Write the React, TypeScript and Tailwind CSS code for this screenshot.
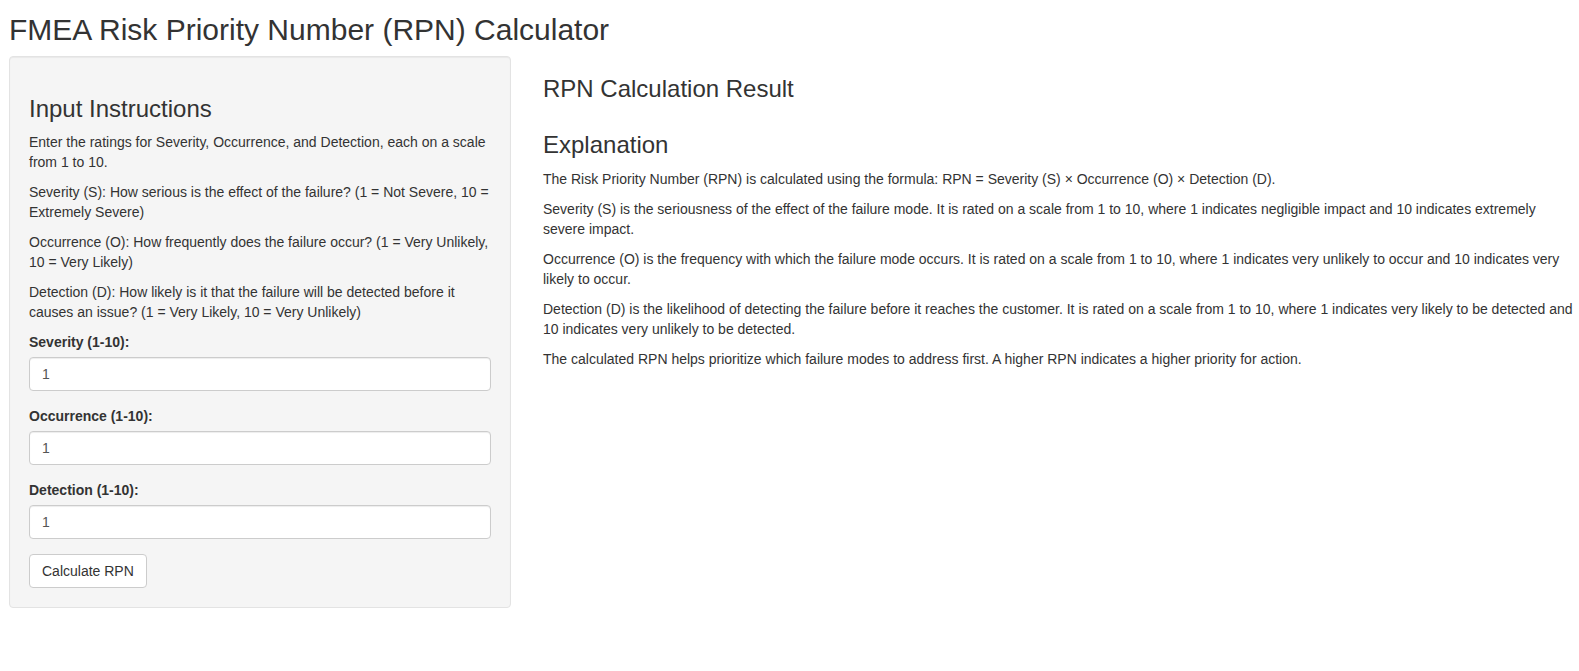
import { useState } from "react";

function NumberField({ label, value, setValue }: { label: string; value: string; setValue: (v: string) => void }) {
    return (
        <div className="mb-[15px]">
            <label className="mb-[5px] inline-block font-bold">{label}</label>
            <input
                type="text"
                value={value}
                onChange={(e) => setValue(e.target.value)}
                className="block h-[34px] w-full rounded-[4px] border border-[#ccc] bg-white px-[12px] py-[6px] text-[14px] leading-[20px] text-[#555] shadow-[inset_0_1px_1px_rgba(0,0,0,0.075)] outline-none"
            />
        </div>
    );
}

export default function App() {
    const [severity, setSeverity] = useState("1");
    const [occurrence, setOccurrence] = useState("1");
    const [detection, setDetection] = useState("1");
    const [rpn, setRpn] = useState<number | null>(null);

    const calculate = () => {
        const s = Number(severity), o = Number(occurrence), d = Number(detection);
        setRpn(s * o * d);
    };

    return (
        <div className="min-h-screen bg-white pl-[9px] pr-[4px] font-['Liberation_Sans',Arial,sans-serif] text-[14px] leading-[20px] text-[#333]">
            <h2 className="mt-[13px] mb-[10px] text-[30px] leading-[33px] font-normal">
                FMEA Risk Priority Number (RPN) Calculator
            </h2>

            <div className="flex items-start gap-[32px]">
                {/* Sidebar */}
                <div className="w-[502px] shrink-0 rounded-[4px] border border-[#e3e3e3] bg-[#f5f5f5] p-[19px] shadow-[inset_0_1px_1px_rgba(0,0,0,0.05)]">
                    <h3 className="mt-[20px] mb-[10px] text-[24px] leading-[26.4px] font-normal">Input Instructions</h3>
                    <p className="mb-[10px]">Enter the ratings for Severity, Occurrence, and Detection, each on a scale from 1 to 10.</p>
                    <p className="mb-[10px]">Severity (S): How serious is the effect of the failure? (1 = Not Severe, 10 = Extremely Severe)</p>
                    <p className="mb-[10px]">Occurrence (O): How frequently does the failure occur? (1 = Very Unlikely, 10 = Very Likely)</p>
                    <p className="mb-[10px]">Detection (D): How likely is it that the failure will be detected before it causes an issue? (1 = Very Likely, 10 = Very Unlikely)</p>

                    <NumberField label="Severity (1-10):" value={severity} setValue={setSeverity} />
                    <NumberField label="Occurrence (1-10):" value={occurrence} setValue={setOccurrence} />
                    <NumberField label="Detection (1-10):" value={detection} setValue={setDetection} />

                    <button
                        type="button"
                        onClick={calculate}
                        className="rounded-[4px] border border-[#ccc] bg-white px-[12px] py-[6px] text-[14px] leading-[20px] text-[#333] hover:bg-[#e6e6e6]"
                    >
                        Calculate RPN
                    </button>
                </div>

                {/* Main panel */}
                <div className="min-w-0 flex-1">
                    <h3 className="mt-[20px] mb-[10px] text-[24px] leading-[26.4px] font-normal">RPN Calculation Result</h3>
                    <div>{rpn !== null ? `RPN: ${rpn}` : ""}</div>
                    <h3 className="mt-[30px] mb-[10px] text-[24px] leading-[26.4px] font-normal">Explanation</h3>
                    <p className="mb-[10px]">The Risk Priority Number (RPN) is calculated using the formula: RPN = Severity (S) × Occurrence (O) × Detection (D).</p>
                    <p className="mb-[10px]">Severity (S) is the seriousness of the effect of the failure mode. It is rated on a scale from 1 to 10, where 1 indicates negligible impact and 10 indicates extremely severe impact.</p>
                    <p className="mb-[10px]">Occurrence (O) is the frequency with which the failure mode occurs. It is rated on a scale from 1 to 10, where 1 indicates very unlikely to occur and 10 indicates very likely to occur.</p>
                    <p className="mb-[10px]">Detection (D) is the likelihood of detecting the failure before it reaches the customer. It is rated on a scale from 1 to 10, where 1 indicates very likely to be detected and 10 indicates very unlikely to be detected.</p>
                    <p className="mb-[10px]">The calculated RPN helps prioritize which failure modes to address first. A higher RPN indicates a higher priority for action.</p>
                </div>
            </div>
        </div>
    );
}
